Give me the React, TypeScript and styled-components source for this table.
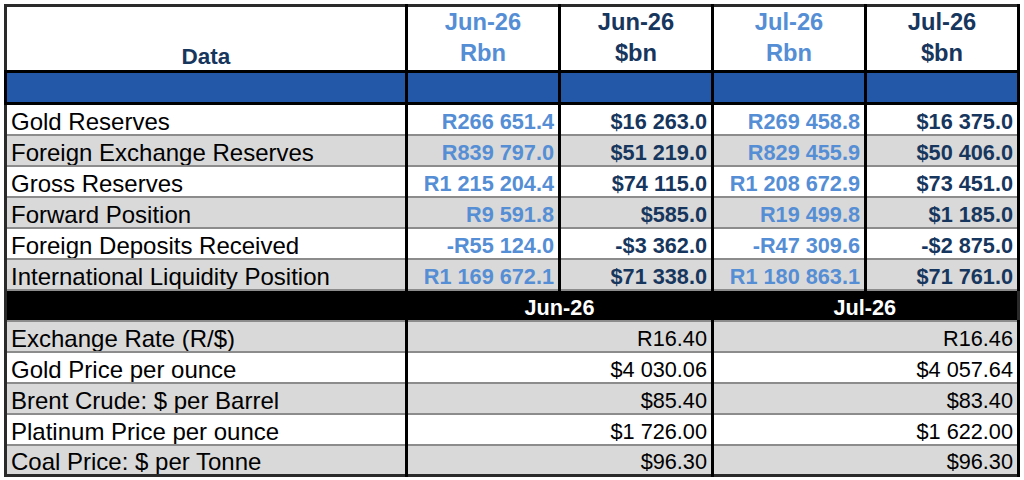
import React from 'react';
import styled, { createGlobalStyle } from 'styled-components';

const Global = createGlobalStyle`
  html, body { margin: 0; padding: 0; background: #ffffff; }
  body { font-family: "Liberation Sans", Arial, sans-serif; }
`;

const Page = styled.div`
  width: 1024px;
  height: 480px;
  box-sizing: border-box;
  padding: 4px 0 0 4px;
  overflow: hidden;
`;

const Table = styled.table`
  border-collapse: collapse;
  table-layout: fixed;
  width: 1014px;
  border: 3px solid #2a2a2a;
`;

const HeadRow = styled.tr`
  height: 66px;
`;

const BandRow = styled.tr`
  height: 32px;
`;

const Row = styled.tr`
  height: 31px;
`;

const HeadCell = styled.th<{ $tone: 'light' | 'navy' }>`
  background: #ffffff;
  vertical-align: bottom;
  text-align: center;
  font-weight: bold;
  font-size: 23.7px;
  line-height: 31px;
  padding: 0 0 1px;
  color: ${(p) => (p.$tone === 'light' ? '#558ed5' : '#17365d')};
  border-left: 3px solid #000;
  border-right: 3px solid #000;
  border-bottom: 3px solid #000;
`;

const DataHead = styled.th`
  background: #ffffff;
  vertical-align: bottom;
  text-align: center;
  font-weight: bold;
  font-size: 22.5px;
  line-height: 26px;
  padding: 0;
  color: #17365d;
  border-right: 3px solid #000;
  border-bottom: 3px solid #000;
`;

const BlueCell = styled.td`
  background: #2358a8;
  border: 3px solid #000;
  padding: 0;
`;

const LabelCell = styled.td<{ $shade: boolean }>`
  background: ${(p) => (p.$shade ? '#d9d9d9' : '#ffffff')};
  color: #000;
  font-size: 24px;
  line-height: 24px;
  vertical-align: bottom;
  padding: 0 4px;
  white-space: nowrap;
  overflow: hidden;
  border-bottom: 2px solid #8c8c8c;
  border-right: 3px solid #000;
`;

const ValueCell = styled.td<{ $shade: boolean; $tone: 'light' | 'navy' | 'plain'; $bold: boolean }>`
  background: ${(p) => (p.$shade ? '#d9d9d9' : '#ffffff')};
  color: ${(p) => (p.$tone === 'light' ? '#558ed5' : p.$tone === 'navy' ? '#17365d' : '#000')};
  font-weight: ${(p) => (p.$bold ? 'bold' : 'normal')};
  font-size: 21.7px;
  line-height: 24px;
  vertical-align: bottom;
  text-align: right;
  padding: 0 4px 0 3px;
  white-space: nowrap;
  overflow: hidden;
  border-bottom: 2px solid #8c8c8c;
  border-left: 3px solid #000;
  border-right: 3px solid #000;
`;

const SectionCell = styled.td`
  background: #000;
  color: #ffffff;
  font-weight: bold;
  font-size: 21.7px;
  line-height: 24px;
  text-align: center;
  vertical-align: bottom;
  padding: 0;
  border-bottom: 2px solid #8c8c8c;
`;

type Upper = [string, string, string, string, string];
type Lower = [string, string, string];

const upper: Upper[] = [
  ['Gold Reserves', 'R266 651.4', '$16 263.0', 'R269 458.8', '$16 375.0'],
  ['Foreign Exchange Reserves', 'R839 797.0', '$51 219.0', 'R829 455.9', '$50 406.0'],
  ['Gross Reserves', 'R1 215 204.4', '$74 115.0', 'R1 208 672.9', '$73 451.0'],
  ['Forward Position', 'R9 591.8', '$585.0', 'R19 499.8', '$1 185.0'],
  ['Foreign Deposits Received', '-R55 124.0', '-$3 362.0', '-R47 309.6', '-$2 875.0'],
  ['International Liquidity Position', 'R1 169 672.1', '$71 338.0', 'R1 180 863.1', '$71 761.0'],
];

const lower: Lower[] = [
  ['Exchange Rate (R/$)', 'R16.40', 'R16.46'],
  ['Gold Price per ounce', '$4 030.06', '$4 057.64'],
  ['Brent Crude: $ per Barrel', '$85.40', '$83.40'],
  ['Platinum Price per ounce', '$1 726.00', '$1 622.00'],
  ['Coal Price: $ per Tonne', '$96.30', '$96.30'],
];

const tones: ('light' | 'navy')[] = ['light', 'navy', 'light', 'navy'];

export default function App() {
  return (
    <>
      <Global />
      <Page>
        <Table>
          <colgroup>
            <col style={{ width: 401 }} />
            <col style={{ width: 153 }} />
            <col style={{ width: 153 }} />
            <col style={{ width: 153 }} />
            <col style={{ width: 153 }} />
          </colgroup>
          <thead>
            <HeadRow>
              <DataHead>Data</DataHead>
              <HeadCell $tone="light">Jun-26<br />Rbn</HeadCell>
              <HeadCell $tone="navy">Jun-26<br />$bn</HeadCell>
              <HeadCell $tone="light">Jul-26<br />Rbn</HeadCell>
              <HeadCell $tone="navy">Jul-26<br />$bn</HeadCell>
            </HeadRow>
          </thead>
          <tbody>
            <BandRow>
              <BlueCell />
              <BlueCell />
              <BlueCell />
              <BlueCell />
              <BlueCell />
            </BandRow>
            {upper.map((r, i) => (
              <Row key={r[0]}>
                <LabelCell $shade={i % 2 === 1}>{r[0]}</LabelCell>
                {r.slice(1).map((v, j) => (
                  <ValueCell key={j} $shade={i % 2 === 1} $tone={tones[j]} $bold>
                    {v}
                  </ValueCell>
                ))}
              </Row>
            ))}
            <Row>
              <SectionCell />
              <SectionCell colSpan={2}>Jun-26</SectionCell>
              <SectionCell colSpan={2}>Jul-26</SectionCell>
            </Row>
            {lower.map((r, i) => (
              <Row key={r[0]}>
                <LabelCell $shade={i % 2 === 0}>{r[0]}</LabelCell>
                <ValueCell colSpan={2} $shade={i % 2 === 0} $tone="plain" $bold={false}>
                  {r[1]}
                </ValueCell>
                <ValueCell colSpan={2} $shade={i % 2 === 0} $tone="plain" $bold={false}>
                  {r[2]}
                </ValueCell>
              </Row>
            ))}
          </tbody>
        </Table>
      </Page>
    </>
  );
}
